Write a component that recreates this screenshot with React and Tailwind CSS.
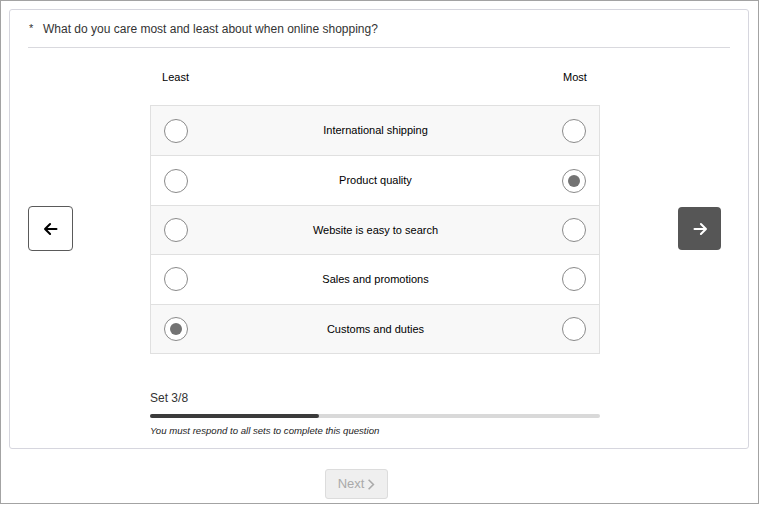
import { useState } from 'react'

const items = [
  'International shipping',
  'Product quality',
  'Website is easy to search',
  'Sales and promotions',
  'Customs and duties',
]

function Radio({ checked }) {
  return (
    <span className="flex h-[24px] w-[24px] items-center justify-center rounded-full border border-[#8a8a8a] bg-white">
      {checked && <span className="h-[12px] w-[12px] rounded-full bg-[#737373]" />}
    </span>
  )
}

function Arrow({ dir, className }) {
  const d = dir === 'left' ? 'M18 12H6M11 6.5L5.5 12l5.5 5.5' : 'M6 12h12M13 6.5l5.5 5.5-5.5 5.5'
  return (
    <svg viewBox="0 0 24 24" className={className} fill="none" stroke="currentColor" strokeWidth="2.2" strokeLinecap="round" strokeLinejoin="round">
      <path d={d} />
    </svg>
  )
}

export default function App() {
  const [least, setLeast] = useState(4)
  const [most, setMost] = useState(1)
  const set = 3, total = 8

  return (
    <div className="h-[504px] w-[759px] border border-[#a3a3a3] bg-white font-['Liberation_Sans',Arial,sans-serif] text-[#222]">
      <div className="ml-[8px] mt-[8px] h-[440px] w-[740px] rounded-[3px] border border-[#d6d6de] px-[18px]">
        <div className="flex h-[38px] items-center border-b border-[#d9d9de] text-[12px] text-[#333]">
          <span className="w-[15px] pl-[1px] text-[11px]">*</span>
          <span>What do you care most and least about when online shopping?</span>
        </div>

        <div className="flex">
          <div className="flex w-[122px] items-start pt-[158px]">
            <button className="flex h-[45px] w-[45px] items-center justify-center rounded-[4px] border border-[#5a5a5a] bg-white text-black">
              <Arrow dir="left" className="h-[22px] w-[22px]" />
            </button>
          </div>

          <div className="w-[450px]">
            <div className="flex h-[57px] items-center pt-[2px] text-[11px] text-black">
              <span className="w-[50px] pl-[1px] text-center">Least</span>
              <span className="flex-1" />
              <span className="w-[50px] text-center">Most</span>
            </div>
            <div className="border border-[#e0e0e0]">
              {items.map((label, i) => (
                <div
                  key={label}
                  className={`flex h-[49.4px] items-center px-[13px] ${i > 0 ? 'border-t border-[#e0e0e0]' : ''} ${i % 2 === 0 ? 'bg-[#f8f8f8]' : 'bg-white'}`}
                >
                  <button onClick={() => setLeast(i)}><Radio checked={least === i} /></button>
                  <span className="flex-1 pl-[1px] text-center text-[11px] text-black">{label}</span>
                  <button onClick={() => setMost(i)}><Radio checked={most === i} /></button>
                </div>
              ))}
            </div>

            <div className="mt-[35px] text-[12px] text-[#333]">Set {set}/{total}</div>
            <div className="mt-[7px] h-[4px] w-full rounded-full bg-[#d9d9d9]">
              <div className="h-full rounded-full bg-[#3b3b3b]" style={{ width: `${(set / total) * 100}%` }} />
            </div>
            <p className="mt-[6px] text-[9.6px] italic text-[#222]">You must respond to all sets to complete this question</p>
          </div>

          <div className="flex flex-1 justify-end pr-[9px] pt-[159px]">
            <button className="flex h-[43px] w-[43px] items-center justify-center rounded-[4px] bg-[#565656] text-white">
              <Arrow dir="right" className="h-[22px] w-[22px]" />
            </button>
          </div>
        </div>
      </div>

      <div className="mt-[20px] flex">
        <button disabled className="ml-[324px] flex h-[30px] w-[63px] items-center justify-center gap-[3px] rounded-[3px] border border-[#dcdcdc] bg-[#efefef] text-[13px] text-[#aaa]">
          Next
          <svg viewBox="0 0 10 16" className="h-[13px] w-[8px]" fill="none" stroke="currentColor" strokeWidth="2">
            <path d="M2 2l6 6-6 6" />
          </svg>
        </button>
      </div>
    </div>
  )
}
